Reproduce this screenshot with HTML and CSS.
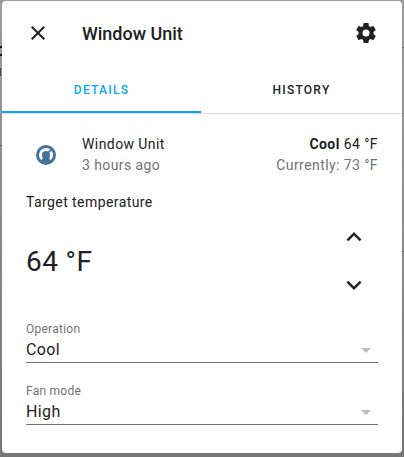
FILE: index.html
```html
<!DOCTYPE html>
<html lang="en">
<head>
<meta charset="utf-8">
<title>Window Unit</title>
<link rel="stylesheet" href="styles.css">
</head>
<body>
<div class="backdrop" aria-hidden="true">
  <i class="mark mark-a"></i><i class="mark mark-b"></i><i class="mark mark-c"></i><i class="mark mark-d"></i><i class="mark mark-e"></i><i class="mark mark-f"></i>
</div>
<main class="dialog">
  <header class="toolbar">
    <svg class="icon" viewBox="0 0 24 24"><path d="M19,6.41L17.59,5L12,10.59L6.41,5L5,6.41L10.59,12L5,17.59L6.41,19L12,13.41L17.59,19L19,17.59L13.41,12L19,6.41Z"/></svg>
    <h1 class="title">Window Unit</h1>
    <svg class="icon" viewBox="0 0 24 24"><path d="M12,15.5A3.5,3.5 0 0,1 8.5,12A3.5,3.5 0 0,1 12,8.5A3.5,3.5 0 0,1 15.5,12A3.5,3.5 0 0,1 12,15.5M19.43,12.97C19.47,12.65 19.5,12.33 19.5,12C19.5,11.67 19.47,11.34 19.43,11L21.54,9.37C21.73,9.22 21.78,8.95 21.66,8.73L19.66,5.27C19.54,5.05 19.27,4.96 19.05,5.05L16.56,6.05C16.04,5.66 15.5,5.32 14.87,5.07L14.5,2.42C14.46,2.18 14.25,2 14,2H10C9.75,2 9.54,2.18 9.5,2.42L9.13,5.07C8.5,5.32 7.96,5.66 7.44,6.05L4.95,5.05C4.73,4.96 4.46,5.05 4.34,5.27L2.34,8.73C2.21,8.95 2.27,9.22 2.46,9.37L4.57,11C4.53,11.34 4.5,11.67 4.5,12C4.5,12.33 4.53,12.65 4.57,12.97L2.46,14.63C2.27,14.78 2.21,15.05 2.34,15.27L4.34,18.73C4.46,18.95 4.73,19.03 4.95,18.95L7.44,17.94C7.96,18.34 8.5,18.68 9.13,18.93L9.5,21.58C9.54,21.82 9.75,22 10,22H14C14.25,22 14.46,21.82 14.5,21.58L14.87,18.93C15.5,18.67 16.04,18.34 16.56,17.94L19.05,18.95C19.27,19.03 19.54,18.95 19.66,18.73L21.66,15.27C21.78,15.05 21.73,14.78 21.54,14.63L19.43,12.97Z"/></svg>
  </header>
  <nav class="tabs">
    <div class="tab active">DETAILS</div>
    <div class="tab">HISTORY</div>
  </nav>
  <section class="content">
    <div class="state">
      <svg class="icon state-icon" viewBox="0 0 24 24"><path fill-rule="evenodd" d="M12,2A10,10 0 0,0 2,12A10,10 0 0,0 12,22A10,10 0 0,0 22,12A10,10 0 0,0 12,2ZM12,5C13.57,5 15,5.5 16.19,6.4L14,8.56C13.43,8.21 12.74,8 12,8A4,4 0 0,0 8,12C8,13.1 8.2,14 8.6,15L7.8,17.2C6,16 5,14 5,12A7,7 0 0,1 12,5ZM17.6,7.81C18.5,9 19,10.43 19,12C19,14 18,16 16.2,17.2L15.4,15C15.8,14 16,13.1 16,12C16,11.26 15.79,10.57 15.43,10Z"/></svg>
      <div class="info"><div>Window Unit</div><div class="muted">3 hours ago</div></div>
      <div class="reading"><div><b>Cool</b> 64 °F</div><div class="muted">Currently: 73 °F</div></div>
    </div>
    <div class="target-label">Target temperature</div>
    <div class="target">
      <div class="temperature">64 °F</div>
      <div class="steps">
        <svg class="icon" viewBox="0 0 24 24"><path d="M7.41,15.41L12,10.83L16.59,15.41L18,14L12,8L6,14L7.41,15.41Z"/></svg>
        <svg class="icon" viewBox="0 0 24 24"><path d="M7.41,8.58L12,13.17L16.59,8.58L18,10L12,16L6,10L7.41,8.58Z"/></svg>
      </div>
    </div>
    <div class="field">
      <div class="field-label">Operation</div>
      <div class="field-value"><span>Cool</span><svg class="icon caret" viewBox="0 0 24 24"><path d="M7,10L12,15L17,10H7Z"/></svg></div>
    </div>
    <div class="field">
      <div class="field-label">Fan mode</div>
      <div class="field-value"><span>High</span><svg class="icon caret" viewBox="0 0 24 24"><path d="M7,10L12,15L17,10H7Z"/></svg></div>
    </div>
  </section>
</main>
</body>
</html>
```
FILE: styles.css
```css
* { box-sizing: border-box; }
body {
  margin: 0;
  height: 457px;
  padding: 1px 2px 4px;
  overflow: hidden;
  position: relative;
  background: linear-gradient(#9c9c9c, #8a8a8a 45%, #777);
  font-family: Roboto, "Liberation Sans", sans-serif;
  font-size: 14px;
  line-height: 20px;
  color: #212121;
}
.backdrop { position: absolute; inset: 0; }
.mark { position: absolute; height: 1px; width: 2px; background: #626262; }
.mark-a { left: 0; top: 46px; height: 2px; background: #111; }
.mark-b { left: 0; top: 54px; height: 2px; background: #111; }
.mark-c { left: 0; top: 68px; width: 1px; height: 8px; background: #49445f; }
.mark-d { left: 0; top: 145px; }
.mark-e { right: 0; top: 47px; }
.mark-f { right: 0; top: 251px; }
.dialog {
  position: relative;
  height: 452px;
  border-radius: 4px;
  background: #fff;
}
.icon { width: 24px; height: 24px; fill: currentColor; flex: none; display: block; }
.toolbar { display: flex; align-items: center; height: 64px; padding: 0 24px; }
.title { margin: 0; padding: 2px 0 0 32px; flex: 1; font-size: 18px; font-weight: 500; line-height: 24px; letter-spacing: -.03px; }
.tabs { display: flex; height: 49px; border-bottom: 1px solid #dcdcdc; }
.tab {
  flex: 1;
  height: 48px;
  padding-top: 1px;
  text-align: center;
  line-height: 48px;
  font-size: 12px;
  font-weight: 500;
  letter-spacing: 1.25px;
}
.tab.active { flex: 0 0 199px; color: #03a9f4; border-bottom: 2px solid #03a9f4; }
.content { padding: 20px 24px 0; }
.state { display: flex; align-items: center; height: 42px; line-height: 21px; letter-spacing: .42px; }
.state-icon { margin: 0 24px 0 8px; color: #44739e; }
.info { flex: 1; }
.reading { text-align: right; }
.muted { color: #727272; }
.target-label { margin-top: 16px; letter-spacing: .42px; }
.target { display: flex; align-items: center; justify-content: space-between; height: 98px; margin-bottom: 9px; }
.temperature { padding-top: 2px; font-size: 28px; line-height: 40px; letter-spacing: .4px; }
.steps { display: flex; flex-direction: column; gap: 18px; margin-right: 9px; }
.steps .icon { width: 30px; height: 30px; }
.field { height: 54px; margin-bottom: 8px; }
.field-label { font-size: 12px; line-height: 20px; color: #727272; letter-spacing: .25px; }
.field-value {
  display: flex;
  align-items: center;
  justify-content: space-between;
  height: 24px;
  border-bottom: 1px solid #727272;
  font-size: 16px;
  line-height: 22px;
  letter-spacing: .4px;
}
.field-value span { margin-top: -2px; }
.caret { margin-top: -2px; color: #bdbdbd; }
```
